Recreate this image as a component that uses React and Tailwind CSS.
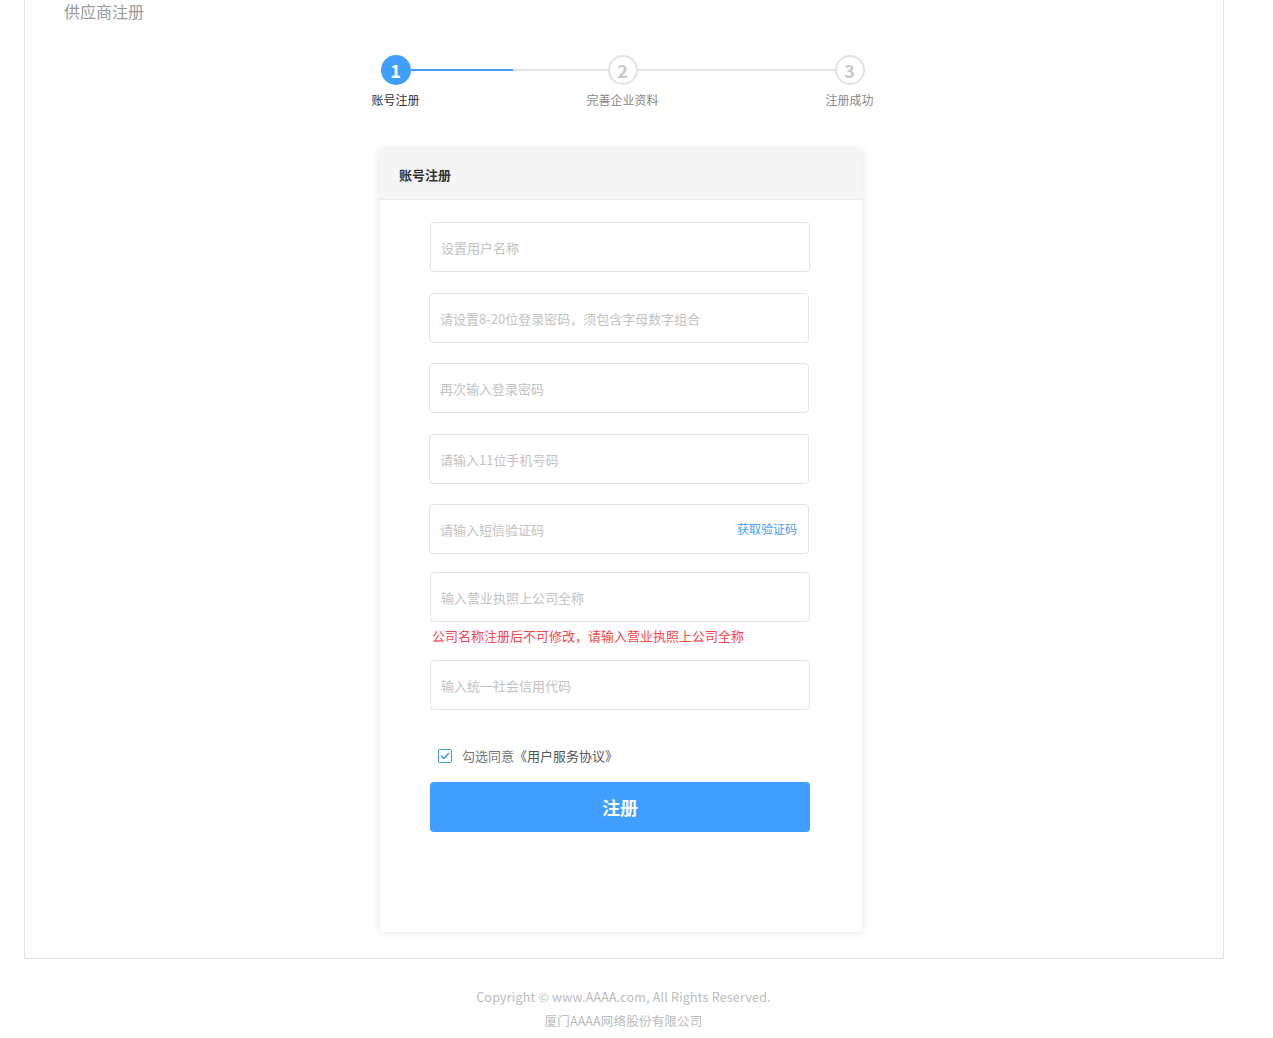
import { useState } from 'react';

const font = { fontFamily: '"Microsoft YaHei", "Noto Sans CJK SC", "Noto Sans", sans-serif' };

function Step({ num, label, active }) {
  return (
    <div className="flex w-[30px] flex-col items-center">
      <div
        className={
          active
            ? 'flex h-[30px] w-[30px] items-center justify-center rounded-full bg-[#409eff] text-[18px] leading-none font-bold text-white'
            : 'flex h-[30px] w-[30px] items-center justify-center rounded-full border-2 border-[#e2e2e2] bg-white text-[18px] leading-none font-bold text-[#c8c8c8]'
        }
      >
        {num}
      </div>
      <div className={`mt-[7px] whitespace-nowrap text-[12px] leading-[16px] ${active ? 'text-[#333]' : 'text-[#888]'}`}>
        {label}
      </div>
    </div>
  );
}

function Field({ placeholder, className = '', extra }) {
  return (
    <div className={`relative mx-auto h-[50px] w-[380px] ${className}`}>
      <input
        type="text"
        placeholder={placeholder}
        className="h-full w-full rounded-[4px] border border-[#e3e3e3] bg-white px-[10px] text-[13px] text-[#333] outline-none placeholder:text-[#c2c2c2]"
      />
      {extra}
    </div>
  );
}

export default function App() {
  const [agree, setAgree] = useState(true);

  return (
    <div className="min-h-screen bg-white" style={font}>
      <div className="ml-[24px] w-[1200px] border-x border-b border-[#e3e3e3] pb-[26px]">
        <div className="pl-[39px] text-[16px] leading-[22px] text-[#999]">供应商注册</div>

        {/* steps */}
        <div className="mt-[33px] flex justify-center">
          <div className="ml-[-3px] flex items-start">
            <Step num="1" label="账号注册" active />
            <div className="mt-[14px] flex h-[2px] w-[197px]">
              <div className="h-full w-[102px] bg-[#409eff]" />
              <div className="h-full flex-1 bg-[#e2e2e2]" />
            </div>
            <Step num="2" label="完善企业资料" />
            <div className="mt-[14px] h-[2px] w-[197px] bg-[#e2e2e2]" />
            <Step num="3" label="注册成功" />
          </div>
        </div>

        {/* card */}
        <div className="mx-auto mt-[42px] h-[782px] w-[482px] translate-x-[-3px] rounded-[4px] bg-white shadow-[0_0_10px_rgba(0,0,0,0.12)]">
          <div className="flex h-[50px] items-center rounded-t-[4px] border-b border-[#ebebeb] bg-[#f5f5f5] pl-[19px] text-[13px] font-bold text-[#333]">
            账号注册
          </div>

          <div className="pt-[22px]">
            <Field placeholder="设置用户名称" className="translate-x-[-1px]" />
            <Field placeholder="请设置8-20位登录密码，须包含字母数字组合" className="mt-[21px] translate-x-[-2px]" />
            <Field placeholder="再次输入登录密码" className="mt-[20px] translate-x-[-2px]" />
            <Field placeholder="请输入11位手机号码" className="mt-[21px] translate-x-[-2px]" />
            <Field
              placeholder="请输入短信验证码"
              className="mt-[20px] translate-x-[-2px]"
              extra={
                <button
                  type="button"
                  className="absolute right-[12px] top-1/2 -translate-y-1/2 text-[12px] text-[#409eff]"
                >
                  获取验证码
                </button>
              }
            />
            <Field placeholder="输入营业执照上公司全称" className="mt-[18px] translate-x-[-1px]" />
            <div className="mx-auto mt-[6px] w-[380px] translate-x-[-1px] pl-[2px] text-[13px] leading-[16px] text-[#f5484a]">
              公司名称注册后不可修改，请输入营业执照上公司全称
            </div>
            <Field placeholder="输入统一社会信用代码" className="mt-[16px] translate-x-[-1px]" />

            <label className="mx-auto mt-[38px] flex w-[380px] translate-x-[-1px] cursor-pointer items-center pl-[8px] text-[13px] leading-[16px]">
              <span
                onClick={() => setAgree(!agree)}
                className="flex h-[14px] w-[14px] items-center justify-center rounded-[2px] border border-[#409eff] bg-white"
              >
                {agree && (
                  <svg width="10" height="10" viewBox="0 0 10 10" fill="none">
                    <path d="M1.5 5.2 L4 7.5 L8.5 2.5" stroke="#409eff" strokeWidth="1.6" strokeLinecap="round" strokeLinejoin="round" />
                  </svg>
                )}
              </span>
              <span className="ml-[10px] text-[#777]">勾选同意</span>
              <span className="text-[#555]">《用户服务协议》</span>
            </label>

            <button
              type="button"
              className="mx-auto mt-[18px] block h-[50px] w-[380px] translate-x-[-1px] rounded-[4px] bg-[#409eff] text-[18px] font-bold text-white"
            >
              注册
            </button>
          </div>
        </div>
      </div>

      <div className="mt-[26px] text-center text-[12.5px] leading-[24px] tracking-[0.2px] text-[#bbb]">
        <div className="translate-x-[-13px]">Copyright © www.AAAA.com, All Rights Reserved.</div>
        <div className="translate-x-[-13px]">厦门AAAA网络股份有限公司</div>
      </div>
    </div>
  );
}
